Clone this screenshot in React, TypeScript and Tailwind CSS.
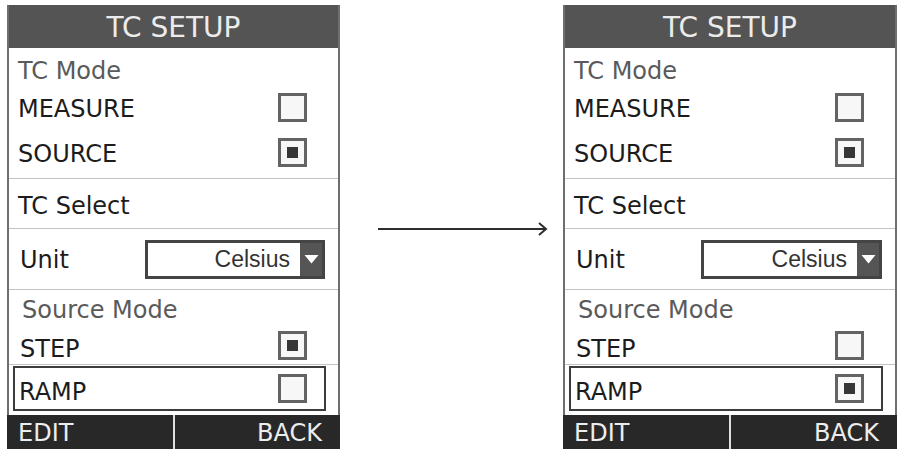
import React from "react";

type Props = { stepOn: boolean };

function Check({ on }: { on: boolean }) {
  return (
    <div className="w-[29px] h-[29px] border-[3px] border-[#636363] bg-[#f7f7f7] flex items-center justify-center">
      {on && <div className="w-[11px] h-[11px] bg-[#363636]" />}
    </div>
  );
}

function Row({ label, on, h }: { label: string; on: boolean; h: string }) {
  return (
    <div className={`${h} flex items-center justify-between pl-[9px] pr-[31px]`}>
      <span className="pt-[3px] text-[#1c1c1c]">{label}</span>
      <Check on={on} />
    </div>
  );
}

function Panel({ stepOn }: Props) {
  return (
    <div className="w-full h-[444px] flex flex-col font-['DejaVu_Sans',sans-serif] text-[24px] leading-none">
      <div className="h-[43px] bg-[#545454] flex items-center justify-center pt-[2px] text-[28px] text-[#ececec] border-x-2 border-[#6e6e6e]">
        TC SETUP
      </div>
      <div className="flex-1 flex flex-col border-x-2 border-[#6e6e6e] bg-white">
        <div className="h-[40px] flex items-center pl-[9px] pt-[6px] text-[#5a5a5a]">TC Mode</div>
        <Row label="MEASURE" on={false} h="h-[38px]" />
        <Row label="SOURCE" on={true} h="h-[52px]" />
        <div className="h-px bg-[#c4c4c4]" />
        <div className="h-[49px] flex items-center pl-[9px] pt-[4px] text-[#1c1c1c]">TC Select</div>
        <div className="h-px bg-[#c4c4c4]" />
        <div className="h-[60px] flex items-center pl-[11px] pr-[13px]">
          <span className="text-[#1c1c1c] w-[125px] pt-[2px]">Unit</span>
          <div className="flex-1 h-[39px] border-[3px] border-[#444] flex items-stretch">
            <div className="flex-1 flex items-center justify-end pr-[10px] font-['Liberation_Sans',sans-serif] text-[23px] text-[#333]">
              Celsius
            </div>
            <div className="w-[22px] bg-[#555] flex items-center justify-center">
              <svg width="15" height="10" viewBox="0 0 15 10">
                <path d="M0.5 1 L14.5 1 L7.5 9.5 Z" fill="#fff" />
              </svg>
            </div>
          </div>
        </div>
        <div className="h-px bg-[#c4c4c4]" />
        <div className="h-[37px] flex items-center pl-[13px] pt-[3px] text-[#5a5a5a]">Source Mode</div>
        <div className="h-[37px] flex items-center justify-between pl-[11px] pr-[31px]">
          <span className="pt-[6px] text-[#1c1c1c]">STEP</span>
          <Check on={stepOn} />
        </div>
        <div className="h-px bg-[#c4c4c4]" />
        <div className="mt-px ml-[4px] mr-[12px] h-[45px] border-2 border-[#3c3c3c] flex items-center justify-between pl-[4px] pr-[17px]">
          <span className="pt-[6px] text-[#1c1c1c]">RAMP</span>
          <Check on={!stepOn} />
        </div>
      </div>
      <div className="h-[34px] bg-[#282828] flex items-stretch text-[#ededed]">
        <div className="w-[166px] flex items-center pl-[11px] pt-[2px]">EDIT</div>
        <div className="w-[2px] bg-[#e0e0e0]" />
        <div className="flex-1 flex items-center justify-end pr-[18px] pt-[2px]">BACK</div>
      </div>
    </div>
  );
}

export default function App() {
  return (
    <div className="w-[897px] h-[449px] bg-white flex pt-[5px] overflow-hidden">
      <div className="ml-[7px] w-[333px] shrink-0">
        <Panel stepOn={true} />
      </div>
      <div className="flex-1 pl-[38px] pr-[15px] pt-[214px]">
        <svg width="170" height="20" viewBox="0 0 170 20">
          <line x1="0" y1="10" x2="168" y2="10" stroke="#2e2e2e" strokeWidth="2" />
          <path d="M161 4 L168 10 L161 16" fill="none" stroke="#2e2e2e" strokeWidth="2" />
        </svg>
      </div>
      <div className="w-[334px] shrink-0">
        <Panel stepOn={false} />
      </div>
    </div>
  );
}
